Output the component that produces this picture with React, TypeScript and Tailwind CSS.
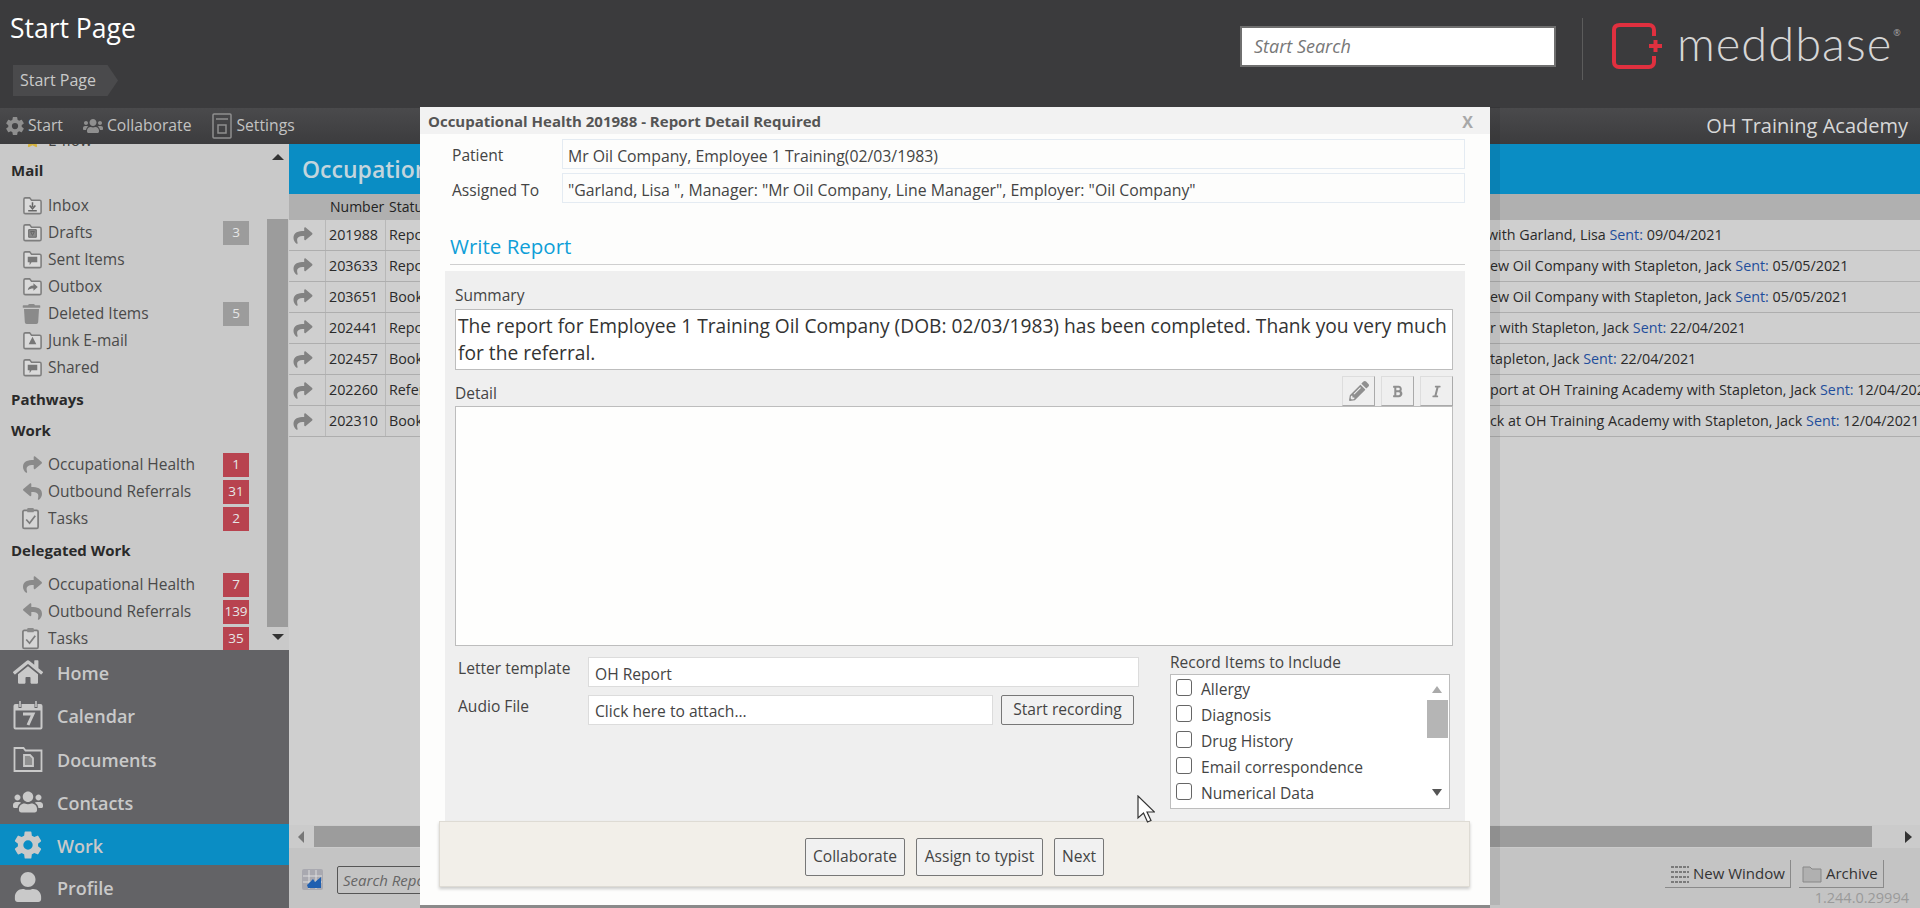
import React from 'react';
import { FaShare, FaReply, FaHome, FaUsers, FaUser, FaPencilAlt, FaBold, FaItalic, FaStar, FaTrash } from 'react-icons/fa';
import { IoSettingsSharp } from 'react-icons/io5';

const FolderIcon = ({ className = '', glyph = 'down' }: { className?: string; glyph?: string }) => (
  <svg viewBox="0 0 22 22" className={className} fill="none">
    <path d="M2 6V4.5C2 3.5 2.6 3 3.5 3H8l2 2.5h8.5c1 0 1.500.6 1.500 1.500v11c0 1-.6 1.500-1.500 1.500h-15C2.600 19.500 2 19 2 18z" fill="#dadada" stroke="#7d7d7d" strokeWidth="1.600" />
    {glyph === 'down' && <path d="M11 7.500v5M8 11l3 3.500 3-3.500M6.500 16.500h9" stroke="#666" strokeWidth="1.600" />}
    {glyph === 'draft' && <path d="M7 8h8v8H7zM9 10h4l-2 4z" fill="#8a8a8a" stroke="#666" />}
    {glyph === 'sent' && <path d="M6 8h10v6H10l-2 3v-3H6z" fill="#777" />}
    {glyph === 'out' && <path d="M6 15c.5-3.500 3-5 6-5V7.500l4.500 4-4.500 4V13c-2.500 0-4.500.5-6 2z" fill="#777" />}
    {glyph === 'junk' && <path d="M11 7l4 8H7z" fill="#777" />}
  </svg>
);

const ClipboardIcon = ({ className = '' }: { className?: string }) => (
  <svg viewBox="0 0 20 24" className={className} fill="none">
    <rect x="2" y="3.500" width="16" height="19" rx="1.500" fill="#d6d6d6" stroke="#7d7d7d" strokeWidth="1.800" />
    <rect x="6.500" y="1" width="7" height="4.500" rx="1" fill="#8a8a8a" />
    <path d="M5.500 13l3.500 4 6-8" stroke="#7d7d7d" strokeWidth="1.800" />
  </svg>
);

const NavIcon = ({ name }: { name: string }) => {
  const cls = 'w-[30px] h-[30px] text-[#c9c9c9]';
  if (name === 'Home') return <FaHome className={cls} />;
  if (name === 'Contacts') return <FaUsers className={cls} />;
  if (name === 'Work') return <IoSettingsSharp className={cls} />;
  if (name === 'Profile') return <FaUser className={cls} />;
  if (name === 'Calendar')
    return (
      <svg viewBox="0 0 30 30" className={cls} fill="none" stroke="#c9c9c9">
        <rect x="1.500" y="5" width="27" height="23.500" rx="1" strokeWidth="2" />
        <path d="M1.500 8h27" strokeWidth="5" />
        <path d="M7 1v7M23 1v7" stroke="#636366" strokeWidth="3" />
        <path d="M7 1v6M23 1v6" strokeWidth="1.500" />
        <path d="M10 14h10l-5 11" strokeWidth="3" />
      </svg>
    );
  return (
    <svg viewBox="0 0 30 28" className={cls} fill="none" stroke="#c9c9c9" strokeWidth="1.800">
      <path d="M1.500 4.500V3h9l2 2.500h16V26h-27z" />
      <path d="M11 10h6l3 3v8h-9z" fill="#8f8f8f" />
    </svg>
  );
};

const Badge = ({ value, red = false }: { value: string | number; red?: boolean }) => (
  <span
    className={`ml-auto mr-[18px] min-w-[26px] h-[24px] px-[1px] flex items-center justify-center text-[13.5px] text-[#e6e6e6] ${
      red ? 'bg-[#b8434f]' : 'bg-[#9c9c9c]'
    }`}
  >
    {value}
  </span>
);

const SideRow = ({ icon, label, badge, red }: { icon: React.ReactNode; label: string; badge?: string | number; red?: boolean }) => (
  <div className="flex items-center h-[27px] pl-[22px]">
    <span className="w-[26px] flex items-center shrink-0">{icon}</span>
    <span className="text-[15.5px] text-[#4a4a4a] whitespace-nowrap">{label}</span>
    {badge !== undefined && <Badge value={badge} red={red} />}
  </div>
);

const SideHeading = ({ children }: { children: React.ReactNode }) => (
  <h3 className="mt-[5px] h-[26px] pl-[11px] text-[15px] leading-[26px] font-bold text-[#2a2a2a]">{children}</h3>
);

const folder = (glyph: string) => <FolderIcon glyph={glyph} className="w-[21px] h-[21px]" />;
const fwd = <FaShare className="w-[21px] h-[19px] text-[#8a8a8a]" />;
const back = <FaReply className="w-[21px] h-[19px] text-[#8a8a8a]" />;
const clip = <ClipboardIcon className="w-[19px] h-[23px] -ml-[1px]" />;

const rows = [
  { num: '201988', status: 'Repor', end: 'with Garland, Lisa ', date: '09/04/2021', cls: 'ml-[1041px]' },
  { num: '203633', status: 'Repor', end: 'ew Oil Company with Stapleton, Jack ', date: '05/05/2021', cls: 'ml-[1044px]' },
  { num: '203651', status: 'Booke', end: 'ew Oil Company with Stapleton, Jack ', date: '05/05/2021', cls: 'ml-[1044px]' },
  { num: '202441', status: 'Repor', end: 'r with Stapleton, Jack ', date: '22/04/2021', cls: 'ml-[1044px]' },
  { num: '202457', status: 'Booke', end: 'tapleton, Jack ', date: '22/04/2021', cls: 'ml-[1044px]' },
  { num: '202260', status: 'Refer', end: 'port at OH Training Academy with Stapleton, Jack ', date: '12/04/2021', cls: 'ml-[1044px]' },
  { num: '202310', status: 'Booke', end: 'ck at OH Training Academy with Stapleton, Jack ', date: '12/04/2021', cls: 'ml-[1044px]' },
];

const recordItems = ['Allergy', 'Diagnosis', 'Drug History', 'Email correspondence', 'Numerical Data'];

const navItems = [
  { name: 'Home', h: 'h-[43px]' },
  { name: 'Calendar', h: 'h-[44px]' },
  { name: 'Documents', h: 'h-[43px]' },
  { name: 'Contacts', h: 'h-[44px]' },
  { name: 'Work', h: 'h-[41px]' },
  { name: 'Profile', h: 'h-[43px]' },
];

const FieldBox = ({ children }: { children: React.ReactNode }) => (
  <div className="h-[30px] w-[903px] border border-[#e4ebf2] pl-[5px] pt-[3px] text-[15.8px] leading-[26px] text-[#444] whitespace-nowrap overflow-hidden">
    {children}
  </div>
);

const ActionButton = ({ children, className = '' }: { children: React.ReactNode; className?: string }) => (
  <button className={`h-[38px] border border-[#777] rounded-[2px] bg-[#f1f1f1] text-[15.6px] text-[#444] ${className}`}>{children}</button>
);

export default function App() {
  return (
    <div className="relative w-[1920px] h-[908px] overflow-hidden flex flex-col bg-[#cdcdcd] font-['Open_Sans','Liberation_Sans',sans-serif]">
      {/* top banner */}
      <header className="h-[108px] shrink-0 bg-[#3b3b3d] flex">
        <div className="pl-[10px] pt-[9px]">
          <h1 className="text-[26.500px] leading-[38px] text-white">Start Page</h1>
          <div className="mt-[18px] ml-[3px] w-[105px] h-[31px] bg-[#4a4a4c] [clip-path:polygon(0_0,90%_0,100%_50%,90%_100%,0_100%)] pl-[7px] text-[16px] leading-[31px] text-[#c9c9c9]">
            Start Page
          </div>
        </div>
        <div className="ml-auto w-[680px] flex items-start">
          <div className="mt-[26px] w-[316px] h-[41px] border-2 border-[#6f6f6f] bg-white pl-[12px] text-[18px] leading-[36px] italic text-[#777]">
            Start Search
          </div>
          <div className="mt-[18px] ml-[26px] w-[1px] h-[62px] bg-[#5c5c5c]" />
          <svg viewBox="0 0 52 46" className="mt-[23px] ml-[29px] w-[52px] h-[46px]" fill="none">
            <path d="M42 13V7c0-3-2-5-5-5H8C4 2 2 4 2 7v32c0 3 2 5 5 5h30c3 0 5-2 5-5v-6" stroke="#e0303f" strokeWidth="4" />
            <path d="M37 23h13M43.500 17v12" stroke="#e0303f" strokeWidth="4" />
          </svg>
          <div className="ml-[13px] mt-[13px] text-[47px] leading-[60px] font-light font-['Lato',sans-serif] tracking-[1px] text-[#d6d6d6]">meddbase</div>
          <span className="ml-[1px] mt-[26px] text-[9px] text-[#aaa]">®</span>
        </div>
      </header>

      {/* toolbar */}
      <div className="h-[36px] shrink-0 bg-gradient-to-b from-[#4a4a4c] to-[#3c3c3e] flex items-center text-[15.700px] text-[#c2c2c2]">
        <IoSettingsSharp className="ml-[5px] w-[20px] h-[20px] text-[#8f8f8f]" />
        <span className="ml-[3px]">Start</span>
        <FaUsers className="ml-[20px] w-[20px] h-[20px] text-[#8f8f8f]" />
        <span className="ml-[4px]">Collaborate</span>
        <svg viewBox="0 0 20 26" className="ml-[21px] w-[20px] h-[26px]" fill="none" stroke="#8f8f8f" strokeWidth="1.500">
          <rect x="1" y="1" width="18" height="24" rx="1" />
          <path d="M4 6h12M6 12h8v8H6z" />
        </svg>
        <span className="ml-[4px]">Settings</span>
        <span className="ml-auto mr-[12px] text-[20px] text-[#d8d8d8]">OH Training Academy</span>
      </div>

      <div className="flex-1 flex min-h-0">
        {/* left column */}
        <aside className="w-[289px] shrink-0 flex flex-col">
          <div className="h-[506px] flex bg-[#c9c9c9] overflow-hidden">
            <div className="w-[267px] -mt-[17px]">
              <div className="flex items-center h-[27px] pl-[25px] text-[15.5px] text-[#444]">
                <FaStar className="w-[15px] h-[15px] text-[#d4b13c]" />
                <span className="ml-[8px]">E-flow</span>
              </div>
              <h3 className="mt-[3px] h-[26px] pl-[11px] text-[15px] leading-[26px] font-bold text-[#2a2a2a]">Mail</h3>
              <div className="mt-[9px]">
                <SideRow icon={folder('down')} label="Inbox" />
                <SideRow icon={folder('draft')} label="Drafts" badge={3} />
                <SideRow icon={folder('sent')} label="Sent Items" />
                <SideRow icon={folder('out')} label="Outbox" />
                <SideRow icon={<FaTrash className="w-[19px] h-[20px] text-[#8a8a8a]" />} label="Deleted Items" badge={5} />
                <SideRow icon={folder('junk')} label="Junk E-mail" />
                <SideRow icon={folder('sent')} label="Shared" />
              </div>
              <SideHeading>Pathways</SideHeading>
              <SideHeading>Work</SideHeading>
              <div className="mt-[8px]">
                <SideRow icon={fwd} label="Occupational Health" badge={1} red />
                <SideRow icon={back} label="Outbound Referrals" badge={31} red />
                <SideRow icon={clip} label="Tasks" badge={2} red />
              </div>
              <SideHeading>Delegated Work</SideHeading>
              <div className="mt-[8px]">
                <SideRow icon={fwd} label="Occupational Health" badge={7} red />
                <SideRow icon={back} label="Outbound Referrals" badge={139} red />
                <SideRow icon={clip} label="Tasks" badge={35} red />
              </div>
            </div>
            <div className="w-[21px] flex flex-col items-center">
              <div className="mt-[10px] h-0 w-0 border-x-[6px] border-x-transparent border-b-[6px] border-b-[#333]" />
              <div className="mt-[59px] w-full h-[408px] bg-[#9c9c9c]" />
              <div className="mt-[7px] h-0 w-0 border-x-[6px] border-x-transparent border-t-[6px] border-t-[#333]" />
            </div>
          </div>
          <nav className="flex-1 bg-[#636366]">
            {navItems.map((item) => (
              <div key={item.name} className={`${item.h} flex items-center pl-[13px] ${item.name === 'Work' ? 'bg-[#0a8dc4]' : ''}`}>
                <span className="w-[30px] flex justify-center">
                  <NavIcon name={item.name} />
                </span>
                <span className="ml-[14px] pt-[3px] text-[18px] font-semibold text-[#c9c9c9]">{item.name}</span>
              </div>
            ))}
          </nav>
        </aside>

        {/* grid behind the dialog */}
        <main className="flex-1 min-w-0 flex flex-col bg-[#cfcfcf]">
          <div className="h-[50px] shrink-0 bg-[#0a8dc4] pl-[13px] text-[23px] leading-[50px] font-semibold text-[#c3d5dd]">Occupational Health</div>
          <div className="h-[26px] shrink-0 bg-[#b0b0b0] flex text-[14px] leading-[26px] text-[#222]">
            <span className="ml-[41px] w-[59px]">Number</span>
            <span>Status</span>
          </div>
          {rows.map((row) => (
            <div key={row.num} className="h-[31px] shrink-0 flex border-b border-[#aeaeae] text-[14.300px] text-[#2a2a2a] whitespace-nowrap overflow-hidden">
              <div className="w-[37px] shrink-0 border-r border-[#b8b8b8] flex items-center pl-[3px]">
                <FaShare className="w-[22px] h-[19px] text-[#828282]" />
              </div>
              <div className="w-[60px] shrink-0 border-r border-[#b8b8b8] pl-[3px] leading-[30px]">{row.num}</div>
              <div className="w-[60px] shrink-0 pl-[3px] leading-[30px]">{row.status}</div>
              <div className={`leading-[30px] ${row.cls}`}>
                {row.end}
                <span className="text-[#1f4e9c]">Sent:</span> {row.date}
              </div>
            </div>
          ))}
          <div className="flex-1" />
          <div className="h-[23px] shrink-0 flex items-center bg-[#cbcbcb]">
            <div className="ml-[9px] h-0 w-0 border-y-[6px] border-y-transparent border-r-[6px] border-r-[#777]" />
            <div className="ml-[10px] w-[1558px] h-[21px] bg-[#9c9c9c]" />
            <div className="ml-[33px] h-0 w-0 border-y-[6px] border-y-transparent border-l-[7px] border-l-[#333]" />
          </div>
          <div className="h-[60px] shrink-0 bg-[#c4c4c4] flex items-start relative">
            <svg viewBox="0 0 21 21" className="mt-[21px] ml-[13px] w-[21px] h-[21px]">
              <rect width="21" height="21" rx="2" fill="#a9a9b0" />
              <path d="M1 7h19M1 13h19M7 1v19M14 1v19" stroke="#ddd" />
              <path d="M5 16l6-6 2 3 6-5v11H6z" fill="#1f5fb0" />
            </svg>
            <div className="mt-[18px] ml-[14px] w-[300px] h-[28px] border border-[#555] rounded-[2px] pl-[5px] text-[15px] leading-[26px] italic text-[#666]">Search Reports</div>
            <button className="absolute left-[1376px] top-[12px] w-[126px] h-[28px] border-r border-b border-[#8a8a8a] flex items-center pl-[4px] text-[15px] text-[#333]">
              <svg viewBox="0 0 22 22" className="w-[22px] h-[22px] shrink-0" stroke="#7a7a7a" strokeWidth="2" strokeDasharray="3 1">
                <path d="M2 4h18M2 9h18M2 14h18M2 19h18" />
              </svg>
              <span className="ml-[2px] whitespace-nowrap">New Window</span>
            </button>
            <button className="absolute left-[1510px] top-[12px] w-[85px] h-[28px] border-r border-b border-[#8a8a8a] flex items-center pl-[3px] text-[15px] text-[#333]">
              <svg viewBox="0 0 22 20" className="w-[22px] h-[20px] shrink-0" fill="#b0b0b0" stroke="#888">
                <path d="M1 18V3h7l2 2h9v13z" />
              </svg>
              <span className="ml-[2px]">Archive</span>
            </button>
            <span className="absolute right-[11px] bottom-[2px] text-[14.500px] leading-[16px] text-[#9a9a9a]">1.244.0.29994</span>
          </div>
        </main>
      </div>

      {/* dialog */}
      <div className="absolute left-[420px] top-[107px] w-[1070px] h-[798px] bg-[#fdfdfc] shadow-[10px_0_0_rgba(0,0,0,0.08),0_3px_0_#8a8a8a]">
        <div className="h-[27px] bg-[#f2f2f2] flex items-center pl-[8px] pt-[2px] text-[15px] font-bold text-[#555]">
          Occupational Health 201988 - Report Detail Required
          <span className="ml-auto mr-[17px] text-[16px] leading-none font-bold text-[#a8a8a8]">X</span>
        </div>
        <div className="mt-[5px] flex items-center">
          <span className="w-[142px] pl-[32px] pt-[4px] text-[15.600px] text-[#444]">Patient</span>
          <FieldBox>Mr Oil Company, Employee 1 Training(02/03/1983)</FieldBox>
        </div>
        <div className="mt-[4px] flex items-center">
          <span className="w-[142px] pl-[32px] pt-[6px] text-[15.600px] text-[#444]">Assigned To</span>
          <FieldBox>"Garland, Lisa ", Manager: "Mr Oil Company, Line Manager", Employer: "Oil Company"</FieldBox>
        </div>
        <h2 className="mt-[30px] ml-[30px] w-[1015px] h-[32px] border-b border-[#cfcfcf] text-[20.500px] leading-[26px] text-[#0f9fd8]">Write Report</h2>

        <div className="mt-[6px] ml-[25px] w-[1020px] h-[550px] bg-[#efefef] pl-[10px] pr-[12px] pt-[15px]">
          <div className="text-[15.500px] leading-[18px] text-[#444]">Summary</div>
          <div className="mt-[5px] h-[61px] border border-[#bdbdbd] bg-white px-[2px] pt-[2px] text-[19.200px] leading-[27px] text-[#333]">
            The report for Employee 1 Training Oil Company (DOB: 02/03/1983) has been completed. Thank you very much for the referral.
          </div>
          <div className="mt-[5px] h-[31px] flex items-end">
            <span className="pb-[1px] text-[15.500px] leading-[24px] text-[#444]">Detail</span>
            <div className="ml-auto flex gap-[6px]">
              {[FaPencilAlt, FaBold, FaItalic].map((Icon, i) => (
                <button key={i} className="w-[33px] h-[30px] border-r border-b border-[#aaa] border-t border-l border-t-[#ddd] border-l-[#ddd] flex items-center justify-center text-[#8f8f8f]">
                  <Icon className={i === 0 ? 'w-[20px] h-[20px]' : 'w-[13px] h-[13px]'} />
                </button>
              ))}
            </div>
          </div>
          <div className="h-[240px] border border-[#bdbdbd] bg-[#fefefd]" />

          <div className="mt-[11px] ml-[3px] flex">
            <div className="w-[681px]">
              <div className="flex">
                <span className="w-[130px] -mt-[1px] text-[15.600px] leading-[24px] text-[#444]">Letter template</span>
                <div className="flex-1 h-[30px] border border-[#dcdcdc] bg-white pl-[6px] pt-[3px] text-[15.600px] leading-[26px] text-[#444]">OH Report</div>
              </div>
              <div className="mt-[8px] flex">
                <span className="w-[130px] -mt-[1px] text-[15.600px] leading-[24px] text-[#444]">Audio File</span>
                <div className="w-[405px] h-[30px] border border-[#dcdcdc] bg-white pl-[6px] pt-[2px] text-[15.600px] leading-[26px] text-[#444]">Click here to attach...</div>
                <button className="ml-[8px] w-[133px] h-[30px] border border-[#777] rounded-[2px] bg-[#f1f1f1] text-[15.600px] text-[#444]">Start recording</button>
              </div>
            </div>
            <div className="ml-[31px] w-[280px]">
              <div className="-mt-[3px] mb-[3px] text-[15.500px] leading-[17px] text-[#444]">Record Items to Include</div>
              <div className="h-[135px] border border-[#bdbdbd] bg-white flex">
                <div className="flex-1 pl-[5px] pt-[2px]">
                  {recordItems.map((item) => (
                    <div key={item} className="h-[26px] flex items-center">
                      <span className="w-[16px] h-[17px] -mt-[5px] rounded-[3px] border border-[#666] bg-white" />
                      <span className="ml-[9px] text-[15.600px] text-[#444]">{item}</span>
                    </div>
                  ))}
                </div>
                <div className="w-[24px] flex flex-col items-center">
                  <div className="mt-[11px] h-0 w-0 border-x-[5px] border-x-transparent border-b-[7px] border-b-[#aaa]" />
                  <div className="mt-[7px] w-[21px] h-[38px] bg-[#b5b5b5]" />
                  <div className="mt-[51px] h-0 w-0 border-x-[5px] border-x-transparent border-t-[7px] border-t-[#555]" />
                </div>
              </div>
            </div>
          </div>
        </div>

        <div className="ml-[19px] w-[1031px] h-[66px] bg-[#f2efe9] border border-[#dedbd4] shadow-[0_2px_3px_rgba(0,0,0,0.2)] flex pt-[16px] pl-[365px]">
          <ActionButton className="w-[100px]">Collaborate</ActionButton>
          <ActionButton className="ml-[11px] w-[127px]">Assign to typist</ActionButton>
          <ActionButton className="ml-[11px] w-[50px]">Next</ActionButton>
        </div>

        {/* mouse pointer */}
        <svg viewBox="0 0 18 28" className="absolute left-[717px] top-[688px] w-[18px] h-[28px]" fill="#fff" stroke="#333" strokeWidth="1.200">
          <path d="M1 1v22l5.500-5 4 9 3.500-1.500-4-8.500h7.500z" />
        </svg>
      </div>
    </div>
  );
}
